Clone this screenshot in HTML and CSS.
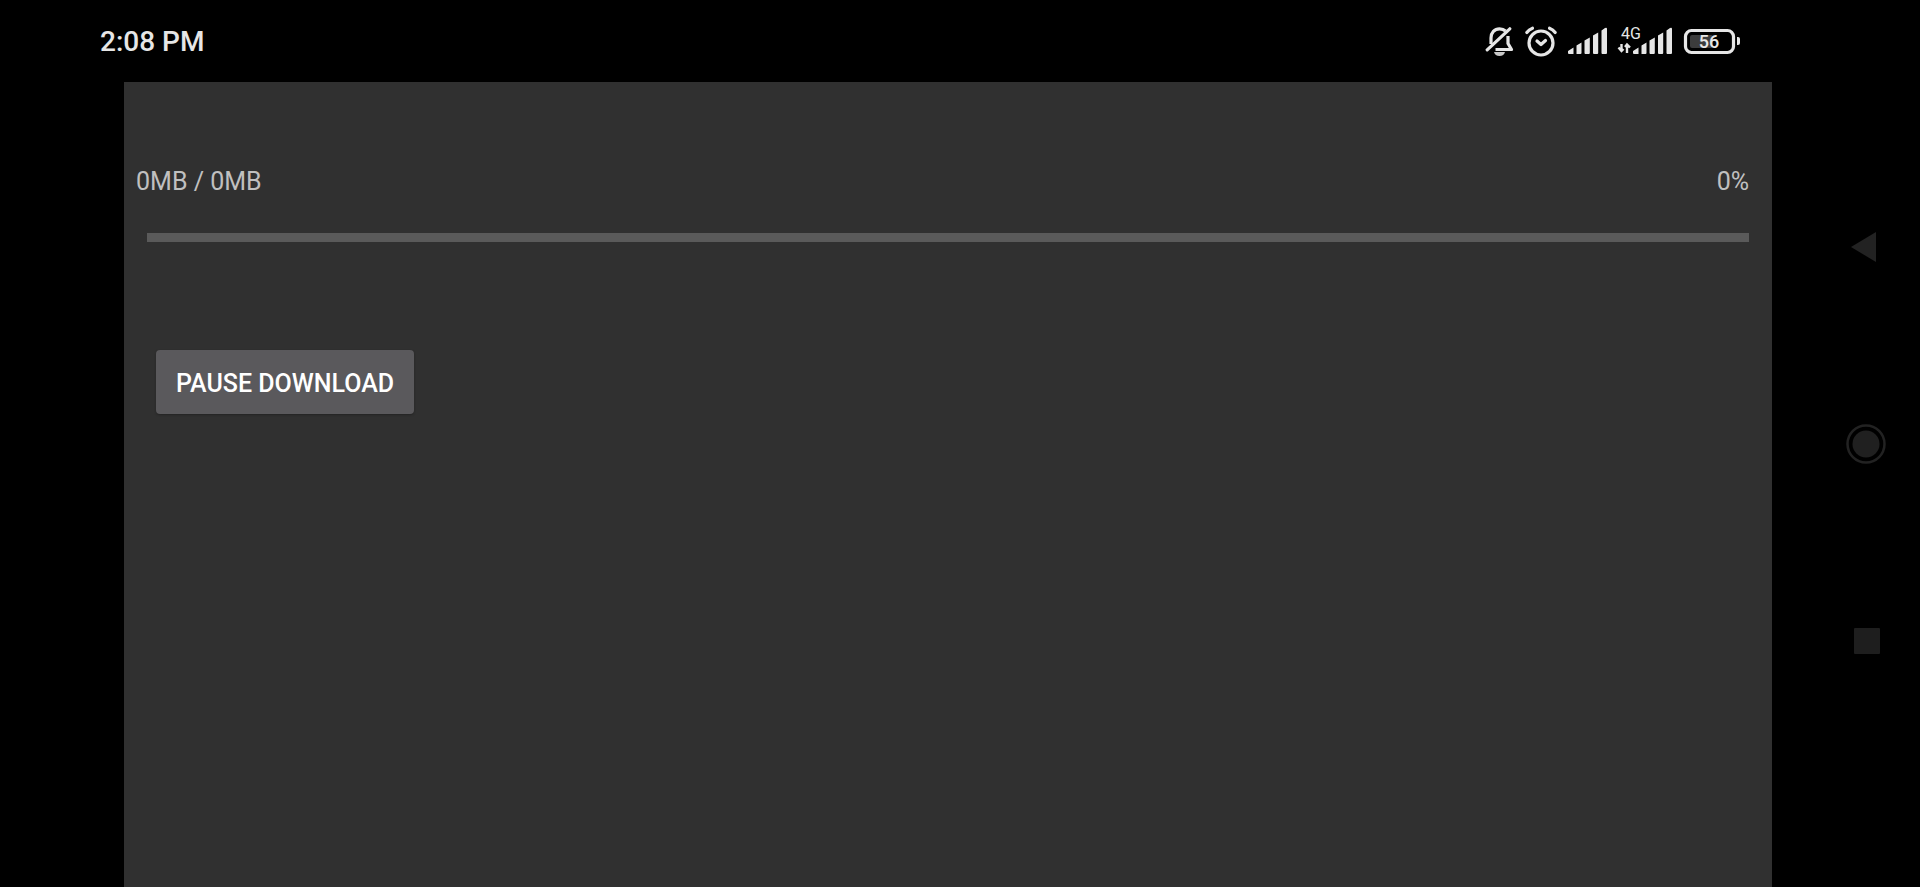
FILE: index.html
```html
<!DOCTYPE html>
<html lang="en">
<head>
<meta charset="utf-8">
<meta name="viewport" content="width=device-width, initial-scale=1">
<title>Download</title>
<link rel="stylesheet" href="styles.css">
</head>
<body>
<div class="screen">
  <header class="status">
    <time class="clock">2:08 PM</time>
    <div class="indicators">
      <svg class="bell" width="30" height="40" viewBox="0 -4 30 40" aria-label="Silent" role="img">
        <path d="M6 18V12C6 6.500 9.500 2.800 14.500 2.800C17 2.800 19 3.500 20.500 5M23 10V17.500L26.500 23.500H10.500" fill="none" stroke="#e6e6e6" stroke-width="3.200" stroke-linejoin="round"/>
        <path d="M2.200 23.800L24.800 2.800" stroke="#e6e6e6" stroke-width="3.200" stroke-linecap="round"/>
        <path d="M9 26H20Q19 30 14.500 30Q10 30 9 26Z" fill="#c8c8c8"/>
      </svg>
      <svg class="alarm" width="34" height="40" viewBox="0 -4 34 40" aria-label="Alarm" role="img">
        <g fill="none" stroke="#e6e6e6" stroke-width="3.200" stroke-linecap="round">
          <circle cx="17" cy="17" r="12"/>
          <path d="M2.800 6.500Q5 3.500 8.500 2.200M31.200 6.500Q29 3.500 25.500 2.200"/>
          <path d="M13 15L17 18.500L21.500 14.500" stroke-linejoin="round"/>
        </g>
      </svg>
      <svg class="signal" width="41" height="40" viewBox="0 -4 41 40" aria-label="Signal" role="img">
        <path id="bars" fill="#e6e6e6" d="M1 25L6.500 21.500V28H2Q1 28 1 27ZM9.500 19.500L14.500 16.500V27Q14.500 28 13.500 28H9.500ZM17.500 14.500L22.800 11.500V27Q22.800 28 21.800 28H18.500Q17.500 28 17.500 27ZM26 9.500L31.200 6.500V27Q31.200 28 30.200 28H27Q26 28 26 27ZM34.500 4.500L38 2Q40 1 40 3V27Q40 28 39 28H35.500Q34.500 28 34.500 27Z"/>
      </svg>
      <svg class="data" width="57" height="40" viewBox="0 -4 57 40" aria-label="4G signal" role="img">
        <text x="4" y="13" class="network">4G</text>
        <path d="M4.500 18V25M1.500 21.500L4.500 25L6.500 23M10 27V19M8 21L10 18.500L13 21.500" fill="none" stroke="#e6e6e6" stroke-width="2.400"/>
        <use href="#bars" x="15"/>
      </svg>
      <svg class="battery" width="58" height="40" viewBox="0 -4 58 40" aria-label="Battery 56 percent" role="img">
        <rect x="2.500" y="4.500" width="48" height="22" rx="6" fill="none" stroke="#e6e6e6" stroke-width="3.200"/>
        <rect x="7" y="9" width="23" height="13" rx="2" fill="#3c3c3c"/>
        <path d="M54 11H55Q57 11 57 13V17Q57 19 55 19H54Z" fill="#e6e6e6"/>
        <text x="26" y="22" text-anchor="middle" class="charge">56</text>
      </svg>
    </div>
  </header>
  <main class="panel">
    <div class="amounts">
      <span>0MB / 0MB</span>
      <span>0%</span>
    </div>
    <progress class="bar" value="0" max="100" aria-label="Download progress"></progress>
    <button class="pause" type="button">PAUSE DOWNLOAD</button>
  </main>
  <nav class="keys" aria-label="System">
    <button class="key" type="button" aria-label="Back">
      <svg width="40" height="40" viewBox="0 0 40 40"><path d="M5 20L30 5V35Z" fill="#222"/></svg>
    </button>
    <button class="key" type="button" aria-label="Home">
      <svg width="40" height="40" viewBox="0 0 40 40"><circle cx="20" cy="20" r="18.500" fill="none" stroke="#222" stroke-width="2.500"/><circle cx="20" cy="20" r="13.500" fill="#202020"/></svg>
    </button>
    <button class="key" type="button" aria-label="Recent apps">
      <svg width="40" height="40" viewBox="0 0 40 40"><rect x="8" y="7" width="26" height="26" rx="1" fill="#1e1e1e"/></svg>
    </button>
  </nav>
</div>
</body>
</html>
```

FILE: styles.css
```css
* {
  box-sizing: border-box;
}

body {
  margin: 0;
  background: #000;
  font-family: Roboto, "Liberation Sans", sans-serif;
}

.screen {
  display: grid;
  grid-template-columns: 124px 1fr 148px;
  grid-template-rows: 82px 1fr;
  min-height: 100vh;
}

.status {
  grid-column: 1 / -1;
  grid-row: 1;
  display: flex;
  align-items: center;
  justify-content: space-between;
  padding: 2px 179px 0 100px;
}

.clock {
  color: #e6e6e6;
  font-size: 28px;
  font-weight: 500;
  line-height: 32px;
}

.indicators {
  display: flex;
  gap: 9px;
}

.network {
  fill: #e6e6e6;
  font-size: 16px;
}

.charge {
  fill: #e6e6e6;
  font-size: 18px;
  font-weight: 500;
}

.panel {
  grid-column: 2;
  grid-row: 2;
  display: flex;
  flex-direction: column;
  align-items: stretch;
  padding: 84px 23px 0;
  background: #303030;
}

.amounts {
  display: flex;
  justify-content: space-between;
  margin-left: -11px;
  color: #c0c0c0;
  font-size: 25px;
  line-height: 32px;
}

.bar {
  appearance: none;
  width: 100%;
  height: 9px;
  margin-top: 35px;
  border: 0;
  background: #5a5a5a;
}

.bar::-webkit-progress-bar {
  background: #5a5a5a;
}

.pause {
  align-self: flex-start;
  height: 64px;
  margin: 108px 0 0 9px;
  padding: 4px 20px 0;
  border: 0;
  border-radius: 4px;
  background: #5a595c;
  box-shadow: 0 1px 2px #242424;
  color: #fff;
  font: 500 25px/32px Roboto, "Liberation Sans", sans-serif;
}

.keys {
  grid-column: 3;
  grid-row: 1 / -1;
  display: flex;
  flex-direction: column;
  align-items: center;
  justify-content: center;
  gap: 157px;
  padding-left: 40px;
}

.key {
  display: flex;
  padding: 0;
  border: 0;
  background: none;
}
```
